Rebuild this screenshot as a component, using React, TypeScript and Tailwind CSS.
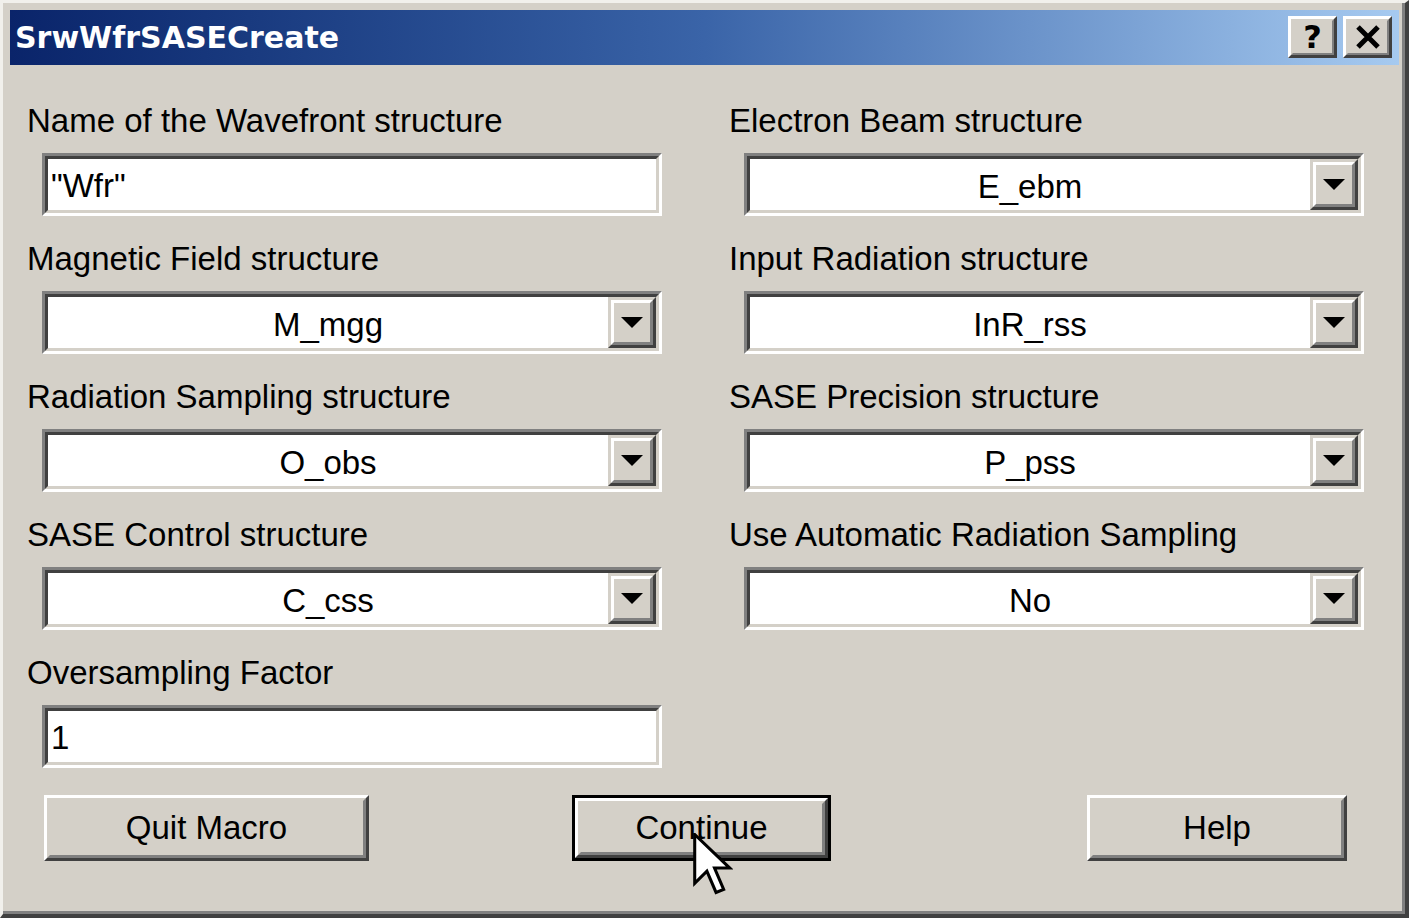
import React from "react";

const FONT = { fontFamily: '"Liberation Sans", Arial, sans-serif' };

function Sunken({ children }: { children: React.ReactNode }) {
  return (
    <div className="ml-[15px] mt-[12px] w-[620px] h-[63px] border-[3px] border-t-[#808080] border-l-[#808080] border-r-white border-b-white">
      <div className="w-full h-full border-[3px] border-t-[#404040] border-l-[#404040] border-r-[#d4d0c8] border-b-[#d4d0c8] bg-white flex items-stretch">
        {children}
      </div>
    </div>
  );
}

function TextField({ value }: { value: string }) {
  return (
    <Sunken>
      <div className="flex-1 flex items-center pl-[3px] pt-[3px] text-[33px] text-black">{value}</div>
    </Sunken>
  );
}

function SelectField({ value }: { value: string }) {
  return (
    <Sunken>
      <div className="flex-1 flex items-center justify-center pt-[4px] text-[33px] text-black">{value}</div>
      <div className="w-[48px] h-full border-[3px] border-t-[#d4d0c8] border-l-[#d4d0c8] border-r-[#404040] border-b-[#404040] bg-[#d4d0c8]">
        <div className="w-full h-full border-[3px] border-t-white border-l-white border-r-[#808080] border-b-[#808080] flex items-center justify-center">
          <svg width="22" height="11" viewBox="0 0 22 11">
            <polygon points="0,0 22,0 11,11" fill="#000" />
          </svg>
        </div>
      </div>
    </Sunken>
  );
}

function Field({ label, children }: { label: string; children: React.ReactNode }) {
  return (
    <div className="flex flex-col">
      <div className="h-[40px] leading-[40px] text-[33px] text-black whitespace-nowrap">{label}</div>
      {children}
    </div>
  );
}

function Btn({ label, w, ml, def }: { label: string; w: number; ml: string; def?: boolean }) {
  const inner = (
    <div className="w-full h-full border-[3px] border-t-white border-l-white border-r-[#404040] border-b-[#404040]">
      <div className="w-full h-full border-[3px] border-t-[#d4d0c8] border-l-[#d4d0c8] border-r-[#808080] border-b-[#808080] flex items-center justify-center text-[33px] text-black">
        {label}
      </div>
    </div>
  );
  return (
    <div className={`${ml} h-[66px] ${def ? "border-[3px] border-black" : ""}`} style={{ width: w }}>
      {inner}
    </div>
  );
}

function TitleBtn({ children }: { children: React.ReactNode }) {
  return (
    <div className="w-[49px] h-[42px] border-[3px] border-t-white border-l-white border-r-[#404040] border-b-[#404040] bg-[#d4d0c8]">
      <div className="w-full h-full border-[2px] border-t-[#d4d0c8] border-l-[#d4d0c8] border-r-[#808080] border-b-[#808080] flex items-center justify-center">
        {children}
      </div>
    </div>
  );
}

export default function App() {
  return (
    <div
      className="relative w-[1409px] h-[918px] bg-[#d4d0c8] border-t-[3px] border-l-[3px] border-t-[#f1f0ec] border-l-[#f1f0ec] border-r-[4px] border-b-[4px] border-r-[#404040] border-b-[#404040] overflow-hidden"
      style={FONT}
    >
      <div className="w-full h-full border-r-[3px] border-b-[3px] border-r-[#808080] border-b-[#808080] pt-[7px] pl-[7px] pr-[3px]">
        {/* Title bar */}
        <div className="h-[55px] flex items-center justify-between bg-gradient-to-r from-[#0a246a] via-[#3a64a8] to-[#a6caf0] pl-[5px] pr-[7px]">
          <div
            className="text-white font-bold text-[30px] leading-none"
            style={{ fontFamily: '"DejaVu Sans", Verdana, sans-serif' }}
          >
            SrwWfrSASECreate
          </div>
          <div className="flex gap-[6px] mt-[-2px]">
            <TitleBtn>
              <span
                className="font-bold text-[32px] leading-none text-black"
                style={{ fontFamily: '"DejaVu Sans", Verdana, sans-serif' }}
              >
                ?
              </span>
            </TitleBtn>
            <TitleBtn>
              <svg width="26" height="24" viewBox="0 0 26 24">
                <path d="M3 2 L23 22 M23 2 L3 22" stroke="#000" strokeWidth="5" />
              </svg>
            </TitleBtn>
          </div>
        </div>

        {/* Body */}
        <div className="pl-[17px] pt-[36px]">
          <div className="grid grid-cols-[636px_636px] gap-x-[66px] gap-y-[23px]">
            <Field label="Name of the Wavefront structure">
              <TextField value={'"Wfr"'} />
            </Field>
            <Field label="Electron Beam structure">
              <SelectField value="E_ebm" />
            </Field>
            <Field label="Magnetic Field structure">
              <SelectField value="M_mgg" />
            </Field>
            <Field label="Input Radiation structure">
              <SelectField value="InR_rss" />
            </Field>
            <Field label="Radiation Sampling structure">
              <SelectField value="O_obs" />
            </Field>
            <Field label="SASE Precision structure">
              <SelectField value="P_pss" />
            </Field>
            <Field label="SASE Control structure">
              <SelectField value="C_css" />
            </Field>
            <Field label="Use Automatic Radiation Sampling">
              <SelectField value="No" />
            </Field>
            <Field label="Oversampling Factor">
              <TextField value="1" />
            </Field>
          </div>

          <div className="flex mt-[27px]">
            <Btn label="Quit Macro" w={325} ml="ml-[17px]" />
            <Btn label="Continue" w={259} ml="ml-[203px]" def />
            <Btn label="Help" w={260} ml="ml-[256px]" />
          </div>
        </div>
      </div>

      {/* Mouse cursor */}
      <svg
        className="absolute left-[690px] top-[830px]"
        width="40"
        height="64"
        viewBox="0 0 13 21"
      >
        <polygon
          points="0.5,0.5 0.5,16.5 4.5,12.5 7.5,19.5 10,18.5 7,11.5 12,11.5"
          fill="#fff"
          stroke="#000"
          strokeWidth="1"
          strokeLinejoin="miter"
        />
      </svg>
    </div>
  );
}
